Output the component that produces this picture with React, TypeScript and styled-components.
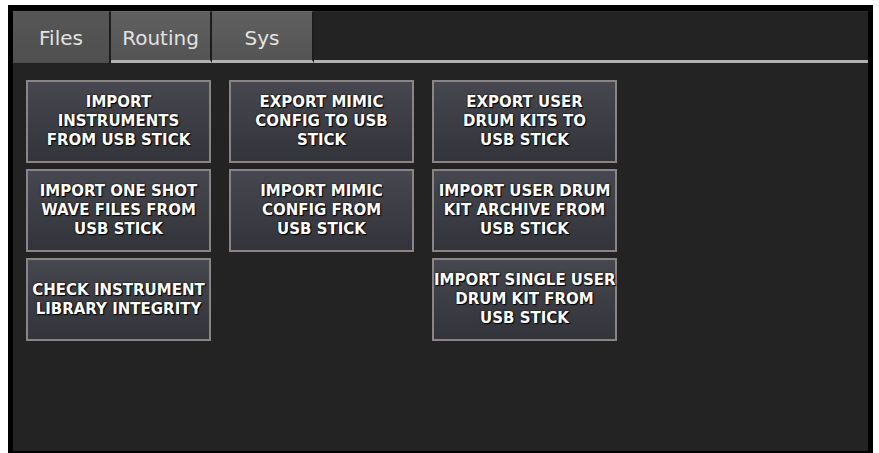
import React from 'react';
import styled, { createGlobalStyle } from 'styled-components';

const GlobalStyle = createGlobalStyle`
  html, body {
    margin: 0;
    padding: 0;
    background: #ffffff;
  }
`;

const Frame = styled.div`
  box-sizing: border-box;
  width: 865px;
  height: 448px;
  margin: 5px 0 0 8px;
  border-style: solid;
  border-color: #000;
  border-width: 6px 5px 2px 5px;
  background: #232323;
  font-family: 'DejaVu Sans', Verdana, sans-serif;
`;

const TabRow = styled.div`
  display: flex;
  align-items: stretch;
  height: 52px;
`;

const Tab = styled.div<{ $active?: boolean; $width: number }>`
  box-sizing: border-box;
  width: ${(p) => p.$width}px;
  display: flex;
  align-items: center;
  justify-content: center;
  padding-top: 4px;
  padding-bottom: ${(p) => (p.$active ? '3px' : '0')};
  font-size: 20px;
  color: #e2e2e2;
  background: ${(p) =>
    p.$active
      ? 'linear-gradient(#565656, #4f4f4f)'
      : 'linear-gradient(#606060, #545454)'};
  border-top: 1px solid ${(p) => (p.$active ? '#5c5c5c' : '#686868')};
  border-right: 2px solid #1c1c1c;
  border-bottom: ${(p) => (p.$active ? 'none' : '3px solid #b2b2b2')};
`;

const TabFiller = styled.div`
  flex: 1;
  border-top: 1px solid #2a2a2a;
  border-bottom: 3px solid #b2b2b2;
`;

const Grid = styled.div`
  display: flex;
  gap: 18px;
  padding: 17px 0 0 13px;
`;

const Column = styled.div`
  display: flex;
  flex-direction: column;
  gap: 6px;
`;

const ActionButton = styled.button`
  box-sizing: border-box;
  width: 185px;
  height: 83px;
  padding: 0;
  margin: 0;
  border: 2px solid #8b8484;
  background: linear-gradient(#47474f, #33333a);
  color: #ffffff;
  font-family: 'DejaVu Sans', Verdana, sans-serif;
  font-weight: bold;
  font-size: 15px;
  letter-spacing: 0;
  line-height: 19px;
  text-align: center;
  white-space: nowrap;
  text-shadow: 0 0 2px #000, 1px 1px 1px #000;
  cursor: pointer;
`;

const columns: string[][][] = [
  [
    ['IMPORT', 'INSTRUMENTS', 'FROM USB STICK'],
    ['IMPORT ONE SHOT', 'WAVE FILES FROM', 'USB STICK'],
    ['CHECK INSTRUMENT', 'LIBRARY INTEGRITY'],
  ],
  [
    ['EXPORT MIMIC', 'CONFIG TO USB', 'STICK'],
    ['IMPORT MIMIC', 'CONFIG FROM', 'USB STICK'],
  ],
  [
    ['EXPORT USER', 'DRUM KITS TO', 'USB STICK'],
    ['IMPORT USER DRUM', 'KIT ARCHIVE FROM', 'USB STICK'],
    ['IMPORT SINGLE USER', 'DRUM KIT FROM', 'USB STICK'],
  ],
];

export default function App() {
  return (
    <>
      <GlobalStyle />
      <Frame>
        <TabRow>
          <Tab $active $width={98}>Files</Tab>
          <Tab $width={101}>Routing</Tab>
          <Tab $width={102}>Sys</Tab>
          <TabFiller />
        </TabRow>
        <Grid>
          {columns.map((col, i) => (
            <Column key={i}>
              {col.map((lines, j) => (
                <ActionButton key={j}>
                  {lines.map((l, k) => (
                    <React.Fragment key={k}>
                      {k > 0 && <br />}
                      {l}
                    </React.Fragment>
                  ))}
                </ActionButton>
              ))}
            </Column>
          ))}
        </Grid>
      </Frame>
    </>
  );
}
